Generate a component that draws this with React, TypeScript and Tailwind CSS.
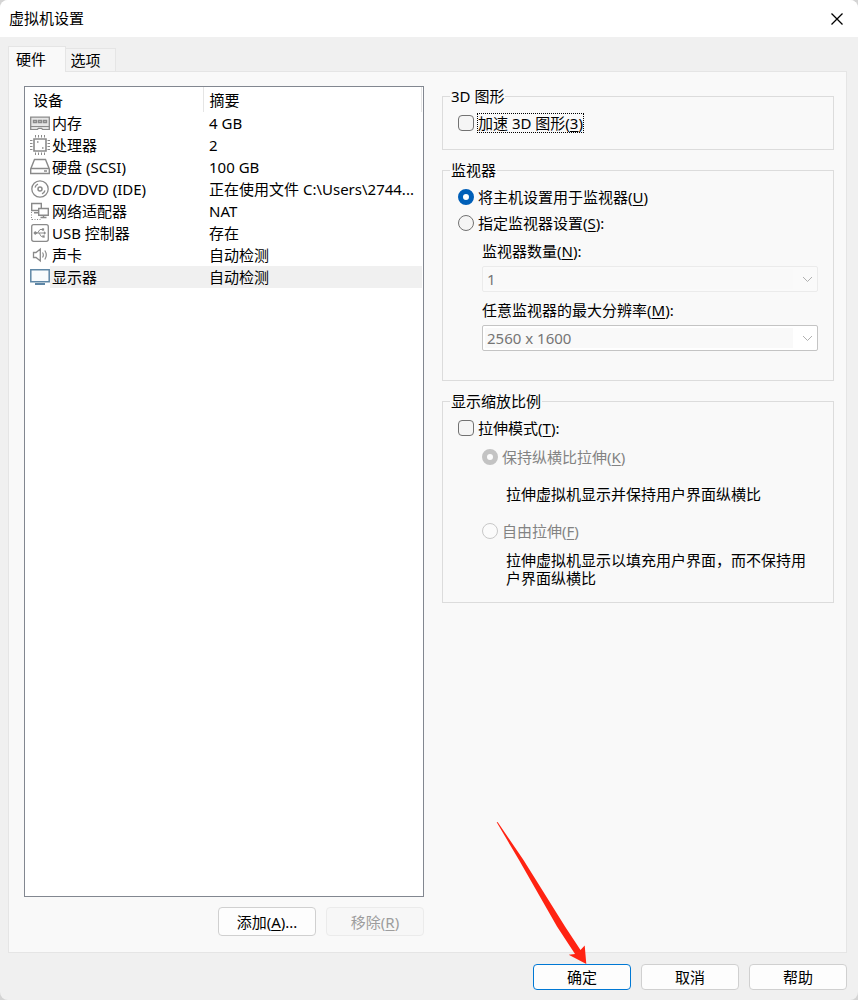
import { ReactNode } from 'react';

interface Device {
  name: string;
  summary: string;
  icon: ReactNode;
  selected?: boolean;
}

interface IconProps {
  children: ReactNode;
  color?: string;
}

const Icon = ({ children, color = '#8a8a8a' }: IconProps) => (
  <svg width="20" height="20" viewBox="0 0 20 20" fill="none" stroke={color} aria-hidden="true" className="shrink-0">
    {children}
  </svg>
);

const DEVICES: Device[] = [
  {
    name: '内存',
    summary: '4 GB',
    icon: (
      <Icon>
        <path d="M.7 4.200h18.600v9.500H.7z" fill="#e6e6e6" strokeWidth="1.300" />
        <path d="M1 16.300h6.500l1-1h3l1 1H19M.7 13v4M19.300 13v4" strokeWidth="1.300" />
        <path d="M3.500 7.500h3v2h-3zM8.500 7.500h3v2h-3zM13.500 7.500h3v2h-3z" strokeWidth="1.400" />
      </Icon>
    ),
  },
  {
    name: '处理器',
    summary: '2',
    icon: (
      <Icon>
        <path d="M4 4h12v12H4z" strokeWidth="1.600" />
        <path d="M5.500 0v2.500M8.500 0v2.500M11.500 0v2.500M14.500 0v2.500M5.500 17.500V20M8.500 17.500V20M11.500 17.500V20M14.500 17.500V20M0 5.500h2.500M0 8.500h2.500M0 11.500h2.500M0 14.500h2.500M17.500 5.500H20M17.500 8.500H20M17.500 11.500H20M17.500 14.500H20" />
        <path d="M7 7h1.500M12 13h1.500" strokeWidth="1.500" />
      </Icon>
    ),
  },
  {
    name: '硬盘 (SCSI)',
    summary: '100 GB',
    icon: (
      <Icon>
        <path d="M4.500 2.500h11L19.300 12v4.500H.700V12zM.700 11.500h18.600" strokeWidth="1.400" />
        <path d="M14 14h3" strokeWidth="1.400" />
      </Icon>
    ),
  },
  {
    name: 'CD/DVD (IDE)',
    summary: '正在使用文件 C:\\Users\\2744...',
    icon: (
      <Icon>
        <circle cx="10" cy="10" r="8.200" strokeWidth="1.300" />
        <circle cx="10" cy="10" r="2" strokeWidth="1.500" />
        <path d="M5 8.500a5 5 0 0 1 3-3.300M15 11.500a5 5 0 0 1-3 3.300" strokeWidth="1.300" />
      </Icon>
    ),
  },
  {
    name: '网络适配器',
    summary: 'NAT',
    icon: (
      <Icon>
        <path d="M1.700 2.500h9.600v7H1.700zM4 11.700h4" strokeWidth="1.400" />
        <path d="M8.700 7.500h9.600v6.800H8.700z" strokeWidth="1.400" fill="#fff" />
        <path d="M13.500 14.500v2M10.500 16.500h6" strokeWidth="1.400" />
        <path d="M1.500 11v8M2 18.500h10" strokeDasharray="1 1.500" />
      </Icon>
    ),
  },
  {
    name: 'USB 控制器',
    summary: '存在',
    icon: (
      <Icon>
        <rect x="1.700" y="1.700" width="16.600" height="16.600" rx="2" strokeWidth="1.300" />
        <path d="M5 10h10M7.500 10l2.500-3.500h2M9 10l2.300 3.500h1.200" />
        <circle cx="5.300" cy="10" r="1.200" fill="#8a8a8a" />
        <path d="M12 5.500h2v2h-2zM12.500 12.500h2v2h-2zM14 8.500l2 1.500-2 1.500z" fill="#8a8a8a" strokeWidth=".3" />
      </Icon>
    ),
  },
  {
    name: '声卡',
    summary: '自动检测',
    icon: (
      <Icon>
        <path d="M3.500 7.500H6L10.300 4v12L6 12.500H3.500z" strokeWidth="1.300" />
        <path d="M12.500 7.500q1.700 2.500 0 5M14.800 5.500q3 4.500 0 9" strokeWidth="1.200" />
      </Icon>
    ),
  },
  {
    name: '显示器',
    summary: '自动检测',
    selected: true,
    icon: (
      <Icon color="#5f87a6">
        <path d="M.800 2.800h18.400v12H.800z" fill="#f8fbfd" strokeWidth="1.500" />
        <path d="M5 17h10" strokeWidth="2" />
      </Icon>
    ),
  },
];

const Key = ({ children }: { children: string }) => (
  <>
    (<u className="underline-offset-2">{children}</u>)
  </>
);

const Group = ({ title, children }: { title: string; children: ReactNode }) => (
  <fieldset className="min-w-0 border border-[#dcdcdc] px-[15px] pb-[15px]">
    <legend className="-ml-2 h-5 px-px leading-5">{title}</legend>
    {children}
  </fieldset>
);

interface OptionProps {
  type: 'checkbox' | 'radio';
  id: string;
  name?: string;
  checked?: boolean;
  disabled?: boolean;
  focused?: boolean;
  children: ReactNode;
}

const Option = ({ type, id, name, checked, disabled, focused, children }: OptionProps) => (
  <div className={`flex h-[22px] items-center gap-1 ${disabled ? 'text-[#838383]' : ''}`}>
    <input
      type={type}
      id={id}
      name={name}
      defaultChecked={checked}
      disabled={disabled}
      className={`size-4 shrink-0 appearance-none border border-[#727272] bg-[#f5f5f5] checked:bg-white disabled:border-[#c8c8c8] disabled:bg-[#fbfbfb]
        ${type === 'radio' ? 'rounded-full checked:border-5 checked:border-[#005fb8] disabled:checked:border-[#c3c3c3]' : 'rounded-[4px] checked:border-[#005fb8] checked:bg-[#005fb8]'}`}
    />
    <label htmlFor={id} className={`leading-[18px] whitespace-nowrap ${focused ? 'outline outline-dotted outline-black' : ''}`}>
      {children}
    </label>
  </div>
);

interface DropdownProps {
  id: string;
  label: ReactNode;
  value: string;
  editable?: boolean;
}

const Dropdown = ({ id, label, value, editable }: DropdownProps) => (
  <div className="flex flex-col gap-1">
    <label htmlFor={id} className="leading-[22px]">{label}</label>
    <div className={`flex h-[26px] items-center rounded-[2px] border p-0.5 ${editable ? 'border-[#c4c4c4] bg-white' : 'border-[#ebebeb] bg-[#fafafa]'}`}>
      <select id={id} disabled className="h-5 min-w-0 flex-1 appearance-none bg-[#f9f9f9] pl-0.5 leading-5 text-[#757575] opacity-100">
        <option>{value}</option>
      </select>
      <svg width="22" height="20" viewBox="0 0 22 20" fill="none" stroke="#b0b0b0" aria-hidden="true">
        <path d="M10 8l4.500 4.500L19 8" />
      </svg>
    </div>
  </div>
);

interface ButtonProps {
  children: ReactNode;
  primary?: boolean;
  disabled?: boolean;
  tall?: boolean;
}

const Button = ({ children, primary, disabled, tall }: ButtonProps) => (
  <button
    type="button"
    disabled={disabled}
    className={`w-[98px] rounded-[4px] border leading-5 ${tall ? 'h-[29px]' : 'h-[26px]'}
      ${primary ? 'border-[#0078d4]' : disabled ? 'border-[#ebebeb]' : 'border-[#d0d0d0]'}
      ${disabled ? 'bg-[#f7f7f7] text-[#9d9d9d]' : 'bg-[#fdfdfd] text-black'}`}
  >
    {children}
  </button>
);

const DeviceTable = () => (
  <div className="flex-1 border border-[#828790] bg-white pr-px">
    <table className="w-full table-fixed border-collapse text-left">
      <thead>
        <tr className="h-[25px]">
          <th className="w-[178px] border-r border-[#e5e5e5] p-0 pl-2 font-normal">设备</th>
          <th className="border-r border-[#e5e5e5] p-0 pl-1.5 font-normal">摘要</th>
        </tr>
      </thead>
      <tbody>
        {DEVICES.map((device) => (
          <tr key={device.name} className="h-[22px]">
            <td className="p-0 pl-[5px]">
              <div className="flex h-[22px] items-center">
                {device.icon}
                <span className={`flex-1 pl-0.5 leading-[22px] ${device.selected ? 'bg-[#f0f0f0]' : ''}`}>{device.name}</span>
              </div>
            </td>
            <td className={`truncate p-0 pl-1.5 leading-[22px] ${device.selected ? 'bg-[#f0f0f0]' : ''}`}>{device.summary}</td>
          </tr>
        ))}
      </tbody>
    </table>
  </div>
);

export default function App() {
  return (
    <div className="bg-[#d4d4d4]">
      <div className="flex min-h-screen flex-col overflow-hidden rounded-lg bg-[#f0f0f0] font-['Noto_Sans','Noto_Sans_CJK_SC',sans-serif] text-[15px] leading-5 text-black">
        <header className="flex h-[37px] items-center justify-between bg-white pr-[15px] pl-[9px]">
          <h1 className="pb-0.5">虚拟机设置</h1>
          <button type="button" aria-label="关闭">
            <svg width="12" height="12" viewBox="0 0 12 12" fill="none" stroke="#000" strokeWidth="1.300">
              <path d="M.500.500l11 11M11.500.500l-11 11" />
            </svg>
          </button>
        </header>

        <main className="flex flex-1 flex-col pt-[9px] pr-[11px] pb-[10px] pl-2">
          <div role="tablist" className="flex items-end">
            <button type="button" role="tab" aria-selected="true" className="z-10 -mb-px h-[26px] w-[58px] border border-b-0 border-[#e5e5e5] bg-[#f9f9f9] pr-3 pb-0.5">
              硬件
            </button>
            <button type="button" role="tab" aria-selected="false" className="h-[23px] w-[50px] border border-b-0 border-l-0 border-[#e5e5e5] bg-[#f3f3f3] pr-2.5">
              选项
            </button>
          </div>

          <div role="tabpanel" className="grid flex-1 grid-cols-[400fr_392fr] gap-[18px] border border-[#e5e5e5] bg-[#f9f9f9] pt-[14px] pr-3 pb-4 pl-[15px]">
            <section className="flex flex-col gap-[10px]">
              <DeviceTable />
              <div className="flex justify-end gap-[10px]">
                <Button tall>添加<Key>A</Key>...</Button>
                <Button tall disabled>移除<Key>R</Key></Button>
              </div>
            </section>

            <section className="flex flex-col gap-[10px]">
              <Group title="3D 图形">
                <div className="pt-1.5">
                  <Option type="checkbox" id="accelerate" focused>加速 3D 图形<Key>3</Key></Option>
                </div>
              </Group>

              <Group title="监视器">
                <div className="flex flex-col gap-1 pt-1.5">
                  <Option type="radio" id="host" name="monitor" checked>将主机设置用于监视器<Key>U</Key></Option>
                  <Option type="radio" id="custom" name="monitor">指定监视器设置<Key>S</Key>:</Option>
                </div>
                <div className="flex flex-col gap-[7px] pt-1.5 pb-[14px] pl-6">
                  <Dropdown id="count" label={<>监视器数量<Key>N</Key>:</>} value="1" />
                  <Dropdown id="resolution" label={<>任意监视器的最大分辨率<Key>M</Key>:</>} value="2560 x 1600" editable />
                </div>
              </Group>

              <Group title="显示缩放比例">
                <div className="pt-1.5">
                  <Option type="checkbox" id="stretch">拉伸模式<Key>T</Key>:</Option>
                </div>
                <div className="flex flex-col pt-[7px] pl-6">
                  <Option type="radio" id="keep" name="scale" checked disabled>保持纵横比拉伸<Key>K</Key></Option>
                  <p className="py-[17px] pl-6 leading-[18px]">拉伸虚拟机显示并保持用户界面纵横比</p>
                  <Option type="radio" id="free" name="scale" disabled>自由拉伸<Key>F</Key></Option>
                  <p className="pt-[9px] pl-6 leading-[18px]">拉伸虚拟机显示以填充用户界面，而不保持用户界面纵横比</p>
                </div>
              </Group>
            </section>
          </div>

          <footer className="flex justify-end gap-[10px] pt-[11px]">
            <div className="relative">
              <Button primary>确定</Button>
              <svg width="120" height="144" viewBox="0 0 120 144" fill="#ff2312" aria-hidden="true" className="pointer-events-none absolute bottom-full -left-11">
                <path d="M7.700 2.300Q8.300 1.500 9.300 3L34.500 40L76 106.500L91.500 130L95.700 125.500L97.300 144L79.700 134.700L86 134L68 106.500L30 40Z" />
              </svg>
            </div>
            <Button>取消</Button>
            <Button>帮助</Button>
          </footer>
        </main>
      </div>
    </div>
  );
}
